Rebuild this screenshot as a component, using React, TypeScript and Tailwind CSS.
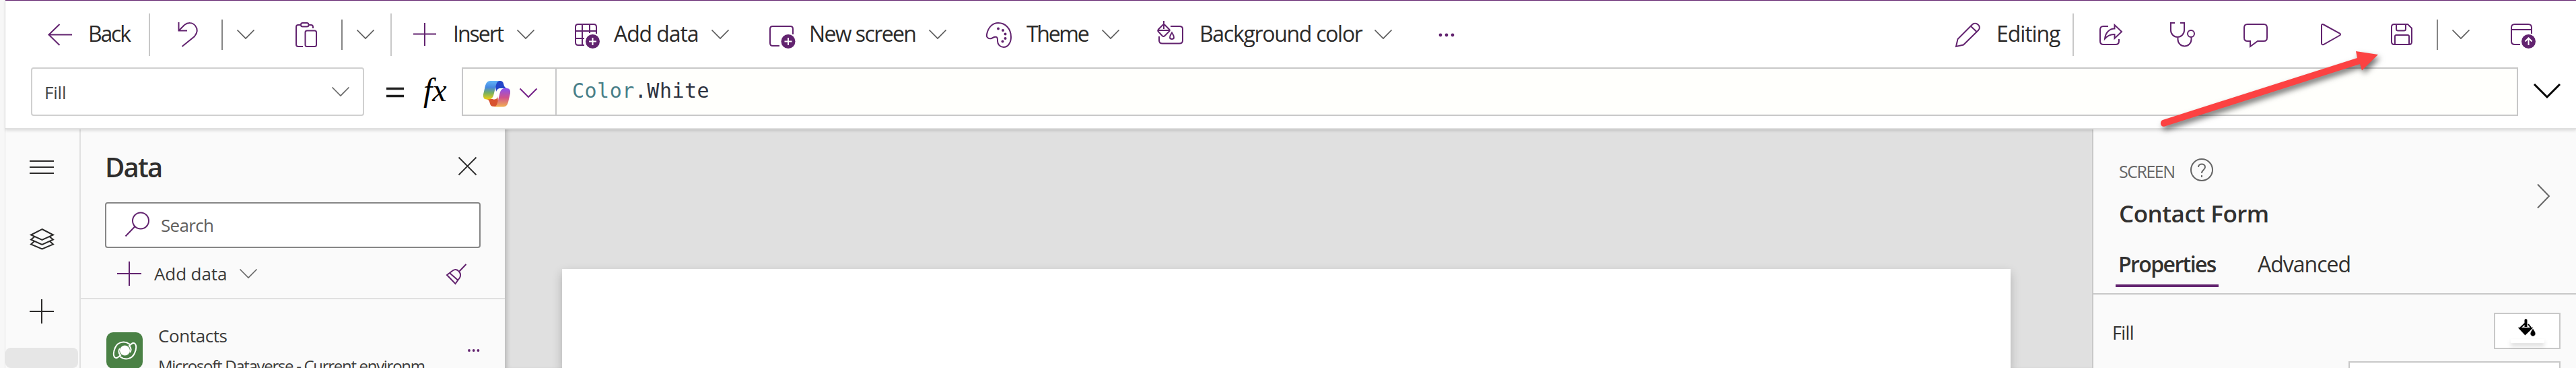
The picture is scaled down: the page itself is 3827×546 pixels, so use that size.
import type { ReactNode } from "react";

const PURPLE = "#62236f";

function Icon({ w, h, className = "", color = PURPLE, sw = 2, children }: { w: number; h: number; className?: string; color?: string; sw?: number; children: ReactNode }) {
  return (
    <svg width={w} height={h} viewBox={`0 0 ${w} ${h}`} fill="none" stroke={color} strokeWidth={sw} className={`block shrink-0 overflow-visible ${className}`}>
      {children}
    </svg>
  );
}

function Chevron({ className = "", color = "#555", sw = 1.6 }: { className?: string; color?: string; sw?: number }) {
  return (
    <Icon w={26} h={14} color={color} sw={sw} className={className}>
      <path d="M.5 .5 13 13 25.500 .5" />
    </Icon>
  );
}

function Label({ className, children }: { className: string; children: string }) {
  return <span className={`block shrink-0 whitespace-nowrap ${className}`}>{children}</span>;
}

function Badge({ children }: { children: ReactNode }) {
  return (
    <>
      <circle cx="26.500" cy="26.500" r="10.500" fill={PURPLE} stroke="none" />
      <g stroke="#fff" strokeWidth="2">{children}</g>
    </>
  );
}

function CommandBar() {
  return (
    <div className="flex h-[99px] shrink-0 items-start text-[32px] leading-[44px] text-[#2b2a29]">
      <Icon w={36} h={32} className="mt-[34px] ml-[63px]"><path d="M17.500 1 1.500 16.500 17.500 32M1.500 16.500H36" /></Icon>
      <Label className="mt-[27px] ml-[24px] w-[66px] tracking-[-2.2px]">Back</Label>
      <div className="mt-[19px] ml-[24px] h-[63px] w-[2px] bg-[#c8c8c8]" />
      <Icon w={30} h={37} className="mt-[32px] ml-[41px]"><path d="M1.500 0V12.500H14M1.500 12.500 10 4C15 0 22 0 26 5c4 5 3 11-1 16L6.500 36" /></Icon>
      <div className="mt-[28px] ml-[35px] h-[45px] w-[2px] bg-[#858585]" />
      <Chevron className="mt-[43px] ml-[21px]" />
      <Icon w={32} h={37} className="mt-[32px] ml-[61px]">
        <path d="M8 4H4Q1 4 1 7V33Q1 36 4 36H11M20 4H23Q26 4 26 7V9" />
        <rect x="8" y="1" width="11.500" height="5.500" rx="2.500" />
        <rect x="14.500" y="12.500" width="16.500" height="23.500" rx="2.500" />
      </Icon>
      <div className="mt-[28px] ml-[36px] h-[45px] w-[2px] bg-[#858585]" />
      <Chevron className="mt-[43px] ml-[21px]" />
      <div className="mt-[19px] ml-[24px] h-[63px] w-[2px] bg-[#c8c8c8]" />
      <Icon w={34} h={34} className="mt-[33px] ml-[32px]"><path d="M17 0V34M0 16.500H34" /></Icon>
      <Label className="mt-[27px] ml-[25px] w-[79px] tracking-[-2px]">Insert</Label>
      <Chevron className="mt-[43px] ml-[16px]" />
      <Icon w={37} h={37} className="mt-[34px] ml-[60px]">
        <path d="M32 15V5Q32 1 28 1H5Q1 1 1 5V28Q1 32 5 32H14M1 11H32M1 22H14M11 1V32M22 1V14" />
        <Badge><path d="M26.500 21V32M21 26.500H32" /></Badge>
      </Icon>
      <Label className="mt-[27px] ml-[21px] w-[129px] tracking-[-1.1px]">Add data</Label>
      <Chevron className="mt-[43px] ml-[16px]" />
      <Icon w={38} h={37} className="mt-[34px] ml-[60px]">
        <path d="M35 16V8Q35 4 31 4H5Q1 4 1 8V29Q1 33 5 33H15" />
        <g transform="translate(1.500 0)"><Badge><path d="M26.500 21V32M21 26.500H32" /></Badge></g>
      </Icon>
      <Label className="mt-[27px] ml-[21px] w-[162px] tracking-[-1.6px]">New screen</Label>
      <Chevron className="mt-[43px] ml-[16px]" />
      <Icon w={38} h={38} className="mt-[32px] ml-[59px]">
        <path d="M1 18C3 7 10 1 18 1c11 0 19 9 19 21 0 9-5 15-11 15-5 0-9-4-9-9v-2c0-4-2-5-5-4l-4 2C4 25 0 23 1 18Z" />
        <g fill={PURPLE} stroke="none"><circle cx="18" cy="9.500" r="2" /><circle cx="25" cy="12" r="2" /><circle cx="28.500" cy="17.500" r="2" /><circle cx="28.500" cy="24" r="2" /><circle cx="24.500" cy="28.500" r="2" /></g>
      </Icon>
      <Label className="mt-[27px] ml-[22px] w-[96px] tracking-[-2.3px]">Theme</Label>
      <Chevron className="mt-[43px] ml-[16px]" />
      <Icon w={39} h={34} className="mt-[30px] ml-[56px]">
        <path d="M10 0V12M10 4.500 2 12.500Q.500 14.500 2 16L7.500 22Q9.500 24 11.500 22L18 15.500Q19.500 14 18 12.500L10 4.500M1 14H19M20 8H33Q38 8 38 12V29Q38 33.500 33 33.500H8Q3 33.500 3 29V23" />
        <path d="M22 17.500C20 21 18.500 22.500 19 25c.500 2.500 5.500 2.500 6 0 .500-2.500-1-4-3-7.500Z" />
      </Icon>
      <Label className="mt-[27px] ml-[24px] w-[245px] tracking-[-1.3px]">Background color</Label>
      <Chevron className="mt-[43px] ml-[15px]" />
      <Icon w={24} h={6} className="mt-[48px] ml-[69px]">
        <g fill={PURPLE} stroke="none"><circle cx="3" cy="3" r="2.400" /><circle cx="12" cy="3" r="2.400" /><circle cx="21" cy="3" r="2.400" /></g>
      </Icon>

      <div className="ml-auto flex items-start">
        <Icon w={37} h={37} className="mt-[32px]"><path d="M1 36 3.500 25 25 3.500C30-2 40 6 34 12L12 33.500ZM23 6 31.500 14" /></Icon>
        <Label className="mt-[27px] ml-[24px] w-[96px] tracking-[-1.1px]">Editing</Label>
        <div className="mt-[19px] ml-[17px] h-[63px] w-[2px] bg-[#c8c8c8]" />
        <Icon w={34} h={32} className="mt-[35px] ml-[38px]">
          <path d="M13 3H6Q1 3 1 8V25Q1 30 6 30H24Q29 30 29 25V22M8 21.500C9 12 15 6.500 22.500 6.500V1L33 11 22.500 21V15C16 14.500 12 17 8 21.500Z" />
        </Icon>
        <Icon w={37} h={37} className="mt-[32px] ml-[71px]">
          <path d="M7 1H1V12a10 10 0 0 0 20 0V1H15M11.500 22V25.500a10 10 0 0 0 20 0V22" /><circle cx="31" cy="17" r="5" />
        </Icon>
        <Icon w={36} h={35} className="mt-[34px] ml-[72px]"><path d="M6 1H30Q35 1 35 6V21Q35 26 30 26H21L10 34V26H6Q1 26 1 21V6Q1 1 6 1Z" /></Icon>
        <Icon w={30} h={32} className="mt-[34px] ml-[79px]"><path d="M1 3Q1 0 4 1.500L28 14.500Q30 16 28 17.500L4 31Q1 32 1 29Z" /></Icon>
        <Icon w={32} h={32} className="mt-[34px] ml-[74px]">
          <path d="M5 1H25L31 7V27Q31 31 27 31H5Q1 31 1 27V5Q1 1 5 1ZM8 1V8Q8 10.500 10.500 10.500H19.500Q22 10.500 22 8V1M6 31V19Q6 17 8 17H25Q27 17 27 19V31" />
        </Icon>
        <div className="mt-[28px] ml-[36px] h-[45px] w-[2px] bg-[#858585]" />
        <Chevron className="mt-[43px] ml-[21px]" />
        <Icon w={37} h={37} className="mt-[34px] mr-[60px] ml-[61px]">
          <path d="M31 15V6Q31 1 26 1H6Q1 1 1 6V26Q1 31 6 31H14M1 9H31" />
          <Badge><path d="M26.500 32V21.500M21.500 26.500 26.500 21.500 31.500 26.500" /></Badge>
        </Icon>
      </div>
    </div>
  );
}

function CopilotLogo() {
  return (
    <svg width="42" height="40" viewBox="0 0 42 40" className="block shrink-0">
      <defs>
        <linearGradient id="cpA" x1="0" y1="0" x2="0" y2="1"><stop offset="0" stopColor="#62b4f8" /><stop offset=".35" stopColor="#4688e0" /><stop offset=".65" stopColor="#78b060" /><stop offset="1" stopColor="#f2cf10" /></linearGradient>
        <linearGradient id="cpB" x1="0" y1="0" x2="0" y2="1"><stop offset="0" stopColor="#8a50f0" /><stop offset=".5" stopColor="#d0528c" /><stop offset="1" stopColor="#f2b050" /></linearGradient>
      </defs>
      <path d="M18 1H26Q30 1 31 5Q32 11 36 12H26Q22 12 20 17Z" fill="#2446c8" />
      <path d="M24 39H16Q12 39 11 35Q10 29 6 28H16Q20 28 22 23Z" fill="#d8522e" />
      <path d="M11 1H25Q21 2 20 7L16 23Q14 28.500 9 28.500H6Q0 28.500 1 21L4 8Q6 1 11 1Z" fill="url(#cpA)" />
      <path d="M31 39.500H17Q21 38.500 22 33.500L26 17.500Q28 12 33 12H36Q42 12 41 19.500L38 32.500Q36 39.500 31 39.500Z" fill="url(#cpB)" />
      <path d="M24.500 12.500Q21.500 14 20.500 18L18 25Q17 28 15 28.500H18Q21.500 28 22.500 24L26 14Z" fill="#fff" />
    </svg>
  );
}

function FormulaBar() {
  return (
    <div className="flex h-[90px] shrink-0 items-start">
      <div className="ml-[38px] flex h-[72px] w-[495px] items-start rounded border-2 border-[#d0d0d0] bg-white">
        <Label className="mt-[17px] ml-[18px] text-[26px] leading-[36px] tracking-[-0.2px] text-[#444]">Fill</Label>
        <Chevron className="mt-[27px] mr-[20px] ml-auto" color="#666" />
      </div>
      <Icon w={26} h={16} className="mt-[29px] ml-[33px]" color="#1f1f1f" sw={3.5}><path d="M0 2.500H26M0 13.500H26" /></Icon>
      <div className="mt-[8px] ml-[29px] w-[57px] shrink-0 font-['Liberation_Serif',serif] text-[48px] leading-[52px] text-black italic">fx</div>
      <div className="flex h-[72px] grow items-start border-2 border-[#c8c8c8] bg-[#fffffc]">
        <div className="flex h-full w-[139px] items-start border-r-2 border-[#c8c8c8]">
          <div className="mt-[17px] ml-[29px]"><CopilotLogo /></div>
          <Chevron className="mt-[29px] ml-[13px]" color="#7a2a8c" sw={2.2} />
        </div>
        <div className="mt-[13px] ml-[23px] font-['DejaVu_Sans_Mono',monospace] text-[30px] leading-[40px] tracking-[0.5px] whitespace-nowrap text-[#2d3340]">
          <span className="text-[#4a8088]">Color</span>.White
        </div>
      </div>
      <Icon w={40} h={22} className="mt-[24px] mr-[23px] ml-[23px]" color="#000" sw={3}><path d="M1 1 20 20 39 1" /></Icon>
    </div>
  );
}

function Rail() {
  return (
    <div className="flex w-[112px] shrink-0 flex-col items-start border-r-2 border-[#e0e0e0]">
      <Icon w={36} h={20} className="mt-[46px] ml-[36px]" color="#2b2a29"><path d="M0 1H36M0 10H36M0 19H36" /></Icon>
      <Icon w={35} h={31} className="mt-[81px] ml-[37px]" color="#2b2a29">
        <path d="M17.500 1 34 9.500 17.500 17 1 9.500ZM6 12.500 1 16.500 17.500 24 34 16.500 29 12.500M6 19 1 23.500 17.500 30.500 34 23.500 29 19" />
      </Icon>
      <Icon w={36} h={36} className="mt-[74px] ml-[36px]" color="#2b2a29"><path d="M18 0V36M0 18H36" /></Icon>
      <div className="mt-[36px] h-[60px] w-[108px] rounded-lg bg-[#e6e6e6]" />
    </div>
  );
}

function DataPanel() {
  return (
    <div className="flex w-[630px] shrink-0 flex-col text-[26px] leading-[36px]">
      <div className="flex h-[108px] shrink-0 items-start">
        <Label className="mt-[28px] ml-[36px] text-[40px] leading-[56px] font-semibold tracking-[-1.8px] text-[#2f2e2d]">Data</Label>
        <Icon w={27} h={27} className="mt-[41px] mr-[42px] ml-auto" color="#333"><path d="M.5 .5 26.500 26.500M26.500 .5 .5 26.500" /></Icon>
      </div>
      <div className="ml-[36px] flex h-[68px] w-[558px] shrink-0 items-start rounded border-2 border-[#868686] bg-white">
        <Icon w={36} h={36} className="mt-[13px] ml-[28px]"><circle cx="23" cy="12.500" r="12" /><path d="M14.500 21 .5 35.500" /></Icon>
        <Label className="mt-[14px] ml-[17px] tracking-[-0.7px] text-[#605e5c]">Search</Label>
      </div>
      <div className="flex h-[76px] shrink-0 items-start border-b-2 border-[#e0e0e0]">
        <Icon w={36} h={36} className="mt-[20px] ml-[54px]"><path d="M18 0V36M0 18H36" /></Icon>
        <Label className="mt-[20px] ml-[19px] w-[110px] tracking-[-0.1px] text-[#3b3a39]">Add data</Label>
        <Chevron className="mt-[31px] ml-[17px]" color="#666" />
        <Icon w={30} h={30} className="mt-[24px] mr-[57px] ml-auto">
          <path d="M29.500 0 18.500 11.500M1 16 9.500 9.500Q15 6 19 11 22.500 15 20 20L13.500 29ZM5 13 17 23.500" />
        </Icon>
      </div>
      <div className="flex min-h-0 grow items-start">
        <Icon w={54} h={54} className="mt-[49px] ml-[38px]" sw={2} color="#fff">
          <rect width="54" height="54" rx="10" fill="#4a8145" stroke="none" />
          <path d="M35 18C27 12 17 14 13 23 9 32 11 39 15.500 38 18 37 19 36 21 34 18 31 18 27 20 24" />
          <path transform="rotate(180 27.500 27)" d="M35 18C27 12 17 14 13 23 9 32 11 39 15.500 38 18 37 19 36 21 34 18 31 18 27 20 24" />
          <circle cx="27.500" cy="27" r="7.500" fill="#fff" stroke="none" />
        </Icon>
        <div className="ml-[23px] flex flex-col">
          <Label className="mt-[36px] tracking-[-0.4px] text-[#3b3a39]">Contacts</Label>
          <Label className="mt-[9px] text-[24px] tracking-[-1.3px] text-[#3b3a39]">Microsoft Dataverse - Current environm</Label>
        </div>
        <Icon w={18} h={6} className="mt-[73px] mr-[37px] ml-auto">
          <g fill={PURPLE} stroke="none"><circle cx="2" cy="3" r="1.900" /><circle cx="8.700" cy="3" r="1.900" /><circle cx="15.400" cy="3" r="1.900" /></g>
        </Icon>
      </div>
    </div>
  );
}

function PropertiesPanel() {
  return (
    <div className="flex w-[719px] shrink-0 flex-col border-l-2 border-[#c8c8c8] bg-[#fafafa]">
      <div className="flex h-[155px] shrink-0 items-start">
        <div className="ml-[38px] flex flex-col">
          <div className="flex items-start">
            <Label className="mt-[44px] w-[86px] text-[25px] leading-[36px] tracking-[-1.5px] text-[#666]">SCREEN</Label>
            <Icon w={34} h={34} className="mt-[43px] ml-[20px]" color="#666">
              <circle cx="17" cy="17" r="16" /><path d="M12 13c0-6 10-6 10 0 0 4-5 4-5 9M17 25v3" />
            </Icon>
          </div>
          <Label className="mt-[21px] text-[35px] leading-[48px] font-semibold tracking-[-0.5px] text-[#323130]">Contact Form</Label>
        </div>
        <Icon w={19} h={36} className="mt-[81px] mr-[39px] ml-auto" color="#666"><path d="M1 .5 18 18 1 35.500" /></Icon>
      </div>
      <div className="flex h-[90px] shrink-0 items-start border-b-2 border-[#c8c8c8] text-[32px] leading-[44px] text-[#323130]">
        <div className="mt-[23px] ml-[33px] flex h-[56px] w-[153px] flex-col border-b-4 border-[#62236f]">
          <Label className="ml-[4px] font-semibold tracking-[-1.6px]">Properties</Label>
        </div>
        <Label className="mt-[23px] ml-[58px] tracking-[-1px]">Advanced</Label>
      </div>
      <div className="mr-[23px] flex h-[99px] shrink-0 items-start">
        <Label className="mt-[39px] ml-[28px] text-[27px] leading-[36px] tracking-[-0.6px] text-[#323130]">Fill</Label>
        <div className="mt-[27px] ml-auto flex h-[54px] w-[99px] flex-col items-center border-2 border-[#c8c8c8] bg-white">
          <Icon w={26} h={27} className="mt-[7px]" color="#000">
            <path d="M9.500 12V2Q10.500 0 11.500 2V12M9 7 1.500 14M14 8 18 13" />
            <path d="M1 14H19L9.500 23Z" fill="#000" />
            <path d="M21 15.500C19 19 17.500 20 18 23c.500 3 5.500 3 6 0 .500-3-1-4-3-7.500Z" fill="#000" strokeWidth="1" />
          </Icon>
          <div className="mt-[3px] h-[6px] w-[50px] shrink-0 bg-white shadow-[0_4px_6px_rgba(0,0,0,0.16)]" />
        </div>
      </div>
      <div className="mr-[23px] ml-auto h-[60px] w-[315px] shrink-0 border-2 border-[#c8c8c8] bg-white" />
    </div>
  );
}

function PointerArrow() {
  return (
    <svg width="340" height="130" viewBox="3200 70 340 130" className="pointer-events-none absolute top-[70px] left-[3200px] overflow-visible drop-shadow-[3px_5px_4px_rgba(0,0,0,0.55)]">
      <path d="M3213 178 3502 86 3500 76 3533 81 3509 104.500 3506 95 3216 187.500Q3211 188.500 3210 184 3209.500 179.500 3213 178Z" fill="#fc4242" />
    </svg>
  );
}

export default function App() {
  return (
    <div className="relative flex h-[546px] w-[3827px] overflow-hidden bg-white font-['Open_Sans',sans-serif]">
      <div className="w-[8px] shrink-0 border-r border-[#e4e4e4] bg-[#f7f7f7]" />
      <div className="flex min-w-0 grow flex-col">
        <header className="relative flex h-[192px] shrink-0 flex-col border-t border-b-2 border-t-[#62236f] border-b-[#e0e0e0] bg-white shadow-[0_2px_4px_rgba(0,0,0,0.12)]">
          <CommandBar />
          <FormulaBar />
        </header>
        <main className="flex min-h-0 grow overflow-hidden bg-[#fafafa]">
          <Rail />
          <DataPanel />
          <div className="flex grow flex-col overflow-hidden bg-[#e0e0e0] pt-[207px] pr-[121px] pl-[85px] shadow-[inset_6px_0_6px_-3px_rgba(0,0,0,0.18)]">
            <div className="grow bg-white shadow-[0_6px_14px_rgba(0,0,0,0.22)]" />
          </div>
          <PropertiesPanel />
        </main>
      </div>
      <PointerArrow />
    </div>
  );
}
